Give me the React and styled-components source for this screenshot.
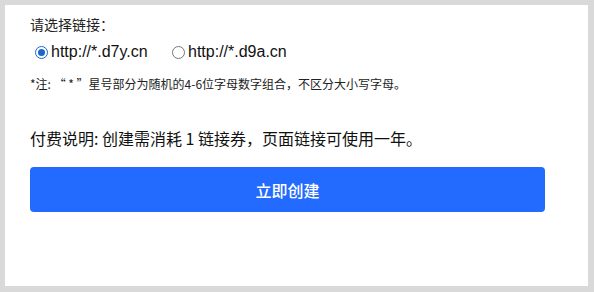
import React, { useState } from 'react';
import styled, { createGlobalStyle } from 'styled-components';

const GlobalStyle = createGlobalStyle`
  html, body { margin: 0; padding: 0; background: #d9d9d9; }
  body { font-family: "Noto Sans CJK SC", "Noto Sans", sans-serif; }
`;

const Page = styled.div`
  width: 594px;
  height: 292px;
  box-sizing: border-box;
  padding: 5px 6px 6px 5px;
`;

const Panel = styled.div`
  height: 100%;
  background: #fff;
  box-sizing: border-box;
  padding: 9px 43px 0 25px;
  display: flex;
  flex-direction: column;
`;

const Label = styled.div`
  font-size: 14px;
  line-height: 20px;
  color: #222;
`;

const RadioRow = styled.div`
  display: flex;
  margin-top: 8px;
  padding-left: 5px;
`;

const Option = styled.label`
  display: flex;
  align-items: center;
  gap: 3px;
  width: 137px;
  font-family: "Liberation Sans", Arial, sans-serif;
  font-size: 16px;
  line-height: 20px;
  color: #111;
  cursor: pointer;
`;

const Dot = styled.span`
  width: 13px;
  height: 13px;
  box-sizing: border-box;
  border-radius: 50%;
  border: 1px solid ${p => (p.$on ? '#1b66c9' : '#767676')};
  display: flex;
  align-items: center;
  justify-content: center;
  &::after {
    content: '';
    width: 7px;
    height: 7px;
    border-radius: 50%;
    background: ${p => (p.$on ? '#1b66c9' : 'transparent')};
  }
`;

const Note = styled.div`
  font-size: 12px;
  line-height: 16px;
  color: #222;
  margin-top: 14px;
`;

const Fee = styled.div`
  font-size: 16px;
  line-height: 22px;
  color: #111;
  margin-top: 35px;
`;

const CreateButton = styled.button`
  margin-top: 18px;
  height: 45px;
  width: 100%;
  border: none;
  border-radius: 4px;
  background: #236bfe;
  color: #fff;
  font-family: "Noto Sans CJK SC", sans-serif;
  font-size: 16px;
  font-weight: 500;
  cursor: pointer;
`;

const domains = ['http://*.d7y.cn', 'http://*.d9a.cn'];

export default function App() {
  const [picked, setPicked] = useState(0);
  return (
    <>
      <GlobalStyle />
      <Page>
        <Panel>
          <Label>请选择链接：</Label>
          <RadioRow>
            {domains.map((d, i) => (
              <Option key={d} onClick={() => setPicked(i)}>
                <Dot $on={picked === i} />
                {d}
              </Option>
            ))}
          </RadioRow>
          <Note>*注: “ * ”星号部分为随机的4-6位字母数字组合，不区分大小写字母。</Note>
          <Fee>付费说明: 创建需消耗 1 链接券，页面链接可使用一年。</Fee>
          <CreateButton>立即创建</CreateButton>
        </Panel>
      </Page>
    </>
  );
}
